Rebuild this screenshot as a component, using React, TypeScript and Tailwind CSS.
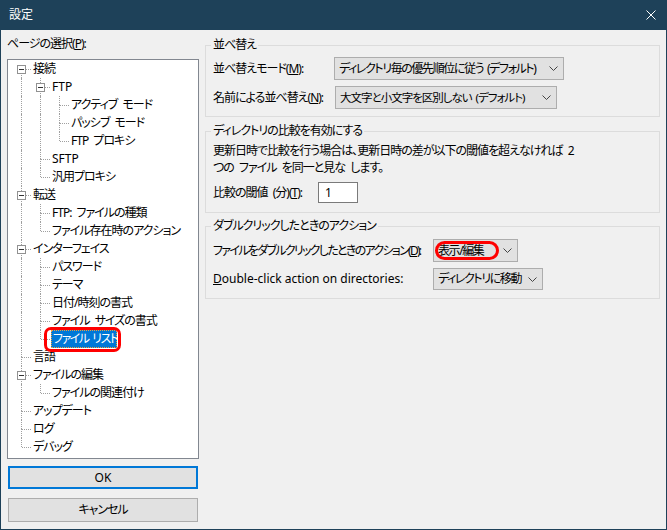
import React from "react";

const FONT = "font-['Noto_Sans','Noto_Sans_CJK_JP',sans-serif] [font-feature-settings:'palt']";

type Node = { label: string; depth: number; open?: boolean; selected?: boolean; latin?: boolean };

const tree: Node[] = [
  { label: "接続", depth: 0, open: true },
  { label: "FTP", depth: 1, open: true, latin: true },
  { label: "アクティブ モード", depth: 2 },
  { label: "パッシブ モード", depth: 2 },
  { label: "FTP プロキシ", depth: 2 },
  { label: "SFTP", depth: 1, latin: true },
  { label: "汎用プロキシ", depth: 1 },
  { label: "転送", depth: 0, open: true },
  { label: "FTP: ファイルの種類", depth: 1 },
  { label: "ファイル存在時のアクション", depth: 1 },
  { label: "インターフェイス", depth: 0, open: true },
  { label: "パスワード", depth: 1 },
  { label: "テーマ", depth: 1 },
  { label: "日付/時刻の書式", depth: 1 },
  { label: "ファイル サイズの書式", depth: 1 },
  { label: "ファイル リスト", depth: 1, selected: true },
  { label: "言語", depth: 0 },
  { label: "ファイルの編集", depth: 0, open: true },
  { label: "ファイルの関連付け", depth: 1 },
  { label: "アップデート", depth: 0 },
  { label: "ログ", depth: 0 },
  { label: "デバッグ", depth: 0 },
];

function hasNext(i: number) {
  const d = tree[i].depth;
  for (let j = i + 1; j < tree.length; j++) {
    if (tree[j].depth < d) return false;
    if (tree[j].depth === d) return true;
  }
  return false;
}

function ancestorHasNext(i: number, level: number) {
  for (let j = i - 1; j >= 0; j--) {
    if (tree[j].depth === level) return hasNext(j);
  }
  return false;
}

function MinusBox() {
  return (
    <span className="absolute left-[5px] top-[5px] flex h-[9px] w-[9px] items-center justify-center border border-[#919191] bg-white">
      <span className="h-px w-[5px] bg-[#333]" />
    </span>
  );
}

function TreeRow({ node, index }: { node: Node; index: number }) {
  const cols = [];
  for (let k = 0; k < node.depth; k++) {
    cols.push(
      <span key={k} className="relative h-[18px] w-[19px] shrink-0">
        {ancestorHasNext(index, k) && (
          <span className="absolute left-[9px] top-0 h-[18px] border-l border-dotted border-[#a0a0a0]" />
        )}
      </span>
    );
  }
  const next = hasNext(index);
  return (
    <div className="flex h-[18px] items-center">
      {cols}
      <span className="relative h-[18px] w-[19px] shrink-0">
        {index > 0 && (
          <span className="absolute left-[9px] top-0 h-[9px] border-l border-dotted border-[#a0a0a0]" />
        )}
        {next && (
          <span className="absolute left-[9px] top-[9px] h-[9px] border-l border-dotted border-[#a0a0a0]" />
        )}
        <span className="absolute left-[10px] top-[9px] w-[9px] border-t border-dotted border-[#a0a0a0]" />
        {node.open && <MinusBox />}
      </span>
      {node.selected ? (
        <span className="relative ml-px flex h-[18px] w-[66px] items-center whitespace-nowrap border border-dotted border-[#e8a040] bg-[#0078d7] pl-px tracking-[-1.5px] text-white [word-spacing:2px]">
          {node.label}
          <span className="pointer-events-none absolute left-[-8px] top-[-4px] h-[25px] w-[77px] rounded-[7px] border-[3px] border-[#ff0000]" />
        </span>
      ) : (
        <span className={`ml-px whitespace-nowrap px-px ${node.latin ? "tracking-normal" : ""}`}>{node.label}</span>
      )}
    </div>
  );
}

function Chevron() {
  return (
    <svg width="9" height="5" viewBox="0 0 9 5" className="ml-auto shrink-0">
      <path d="M0.5 0.5 L4.5 4.5 L8.5 0.5" stroke="#444" strokeWidth="1" fill="none" />
    </svg>
  );
}

function Select({
  text,
  size,
  textClass = "tracking-[-1.4px]",
  children,
}: {
  text: string;
  size: string;
  textClass?: string;
  children?: React.ReactNode;
}) {
  return (
    <div className={`relative flex shrink-0 items-center gap-[2px] border border-[#adadad] bg-[#e1e1e1] pl-[4px] pr-[5px] ${size}`}>
      <span className={`shrink-0 whitespace-nowrap [word-spacing:2px] ${textClass}`}>{text}</span>
      <Chevron />
      {children}
    </div>
  );
}

function Group({ title, children, className = "" }: { title: string; children: React.ReactNode; className?: string }) {
  return (
    <fieldset className={`border border-[#dcdcdc] ${className}`}>
      <legend className="ml-[5px] px-[2px] leading-[16px]">{title}</legend>
      {children}
    </fieldset>
  );
}

export default function App() {
  return (
    <div
      className={`flex h-[530px] w-[667px] flex-col bg-[#1e4159] px-px pb-px text-[12px] tracking-[-1px] text-black [word-spacing:3px] ${FONT}`}
    >
      <div className="flex h-[30px] shrink-0 items-center justify-between pl-[8px] pr-[10px] text-white">
        <span className="leading-[16px] tracking-normal">設定</span>
        <svg width="10" height="10" viewBox="0 0 10 10">
          <path d="M0.5 0.5 L9.5 9.5 M9.5 0.5 L0.5 9.5" stroke="#fff" strokeWidth="1" />
        </svg>
      </div>

      <div className="flex flex-1 gap-[6px] bg-[#f0f0f0] pl-[6px]">
        {/* left: page tree */}
        <div className="flex w-[192px] flex-col pt-[6px]">
          <div className="leading-[16px]">
            ページの選択(<span className="underline">P</span>):
          </div>
          <div className="mt-[7px] h-[400px] border border-[#828790] bg-white pl-[4px]">
            {tree.map((n, i) => (
              <TreeRow key={i} node={n} index={i} />
            ))}
          </div>
          <div className="ml-px mt-[7px] flex h-[23px] w-[190px] items-center justify-center border-2 border-[#0078d7] bg-[#e1e1e1] tracking-normal">
            OK
          </div>
          <div className="ml-px mt-[9px] flex h-[24px] w-[190px] items-center justify-center border border-[#adadad] bg-[#e1e1e1]">
            キャンセル
          </div>
        </div>

        {/* right: options */}
        <div className="flex w-[455px] flex-col pt-[7px]">
          <Group title="並べ替え">
            <div className="flex flex-col gap-[6px] pb-[7px] pl-[7px] pt-[4px]">
              <div className="flex items-center">
                <span className="w-[121px] whitespace-nowrap">
                  並べ替えモード(<span className="underline">M</span>):
                </span>
                <Select text="ディレクトリ毎の優先順位に従う (デフォルト)" size="h-[23px] w-[230px]" />
              </div>
              <div className="flex items-center">
                <span className="w-[122px] whitespace-nowrap">
                  名前による並べ替え(<span className="underline">N</span>):
                </span>
                <Select
                  text="大文字と小文字を区別しない (デフォルト)"
                  size="h-[23px] w-[222px]"
                  textClass="text-[11.5px] tracking-[-1px]"
                />
              </div>
            </div>
          </Group>

          <Group title="ディレクトリの比較を有効にする" className="mt-[6px]">
            <div className="pb-[9px] pl-[7px] pt-[3px]">
              <p className="leading-[17px]">
                更新日時で比較を行う場合は、更新日時の差が以下の閾値を超えなければ 2
                <br />
                つの ファイル を同一と見な します。
              </p>
              <div className="mt-[6px] flex items-center">
                <span className="w-[105px] whitespace-nowrap">
                  比較の閾値 (分)(<span className="underline">T</span>):
                </span>
                <div className="flex h-[21px] w-[40px] items-center border border-[#7a7a7a] bg-white pl-[6px]">1</div>
              </div>
            </div>
          </Group>

          <Group title="ダブルクリックしたときのアクション" className="mt-[5px]">
            <div className="flex flex-col gap-[6px] pb-[8px] pl-[7px] pt-[5px]">
              <div className="flex items-center">
                <span className="w-[220px] whitespace-nowrap tracking-[-1.7px]">
                  ファイルをダブルクリックしたときのアクション(<span className="underline">D</span>):
                </span>
                <Select text="表示/編集" size="h-[23px] w-[85px]">
                  <span className="pointer-events-none absolute left-px top-px h-[19px] w-[64px] rounded-[10px] border-[3px] border-[#ff0000]" />
                </Select>
              </div>
              <div className="flex items-center">
                <span className="w-[220px] whitespace-nowrap tracking-normal [word-spacing:normal]">
                  <span className="underline">D</span>ouble-click action on directories:
                </span>
                <Select text="ディレクトリに移動" size="h-[22px] w-[110px]" />
              </div>
            </div>
          </Group>
        </div>
      </div>
    </div>
  );
}
